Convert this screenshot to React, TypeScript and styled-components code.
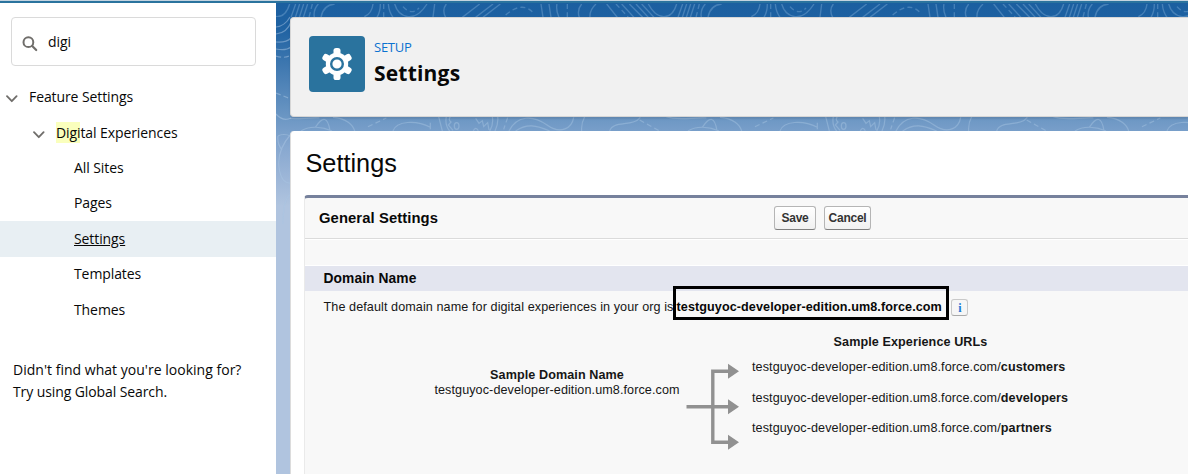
import React from "react";
import styled, { createGlobalStyle } from "styled-components";

const GlobalStyle = createGlobalStyle`
  *, *::after { box-sizing: border-box; }
  body { margin: 0; background: #fff; color: #080808; overflow: hidden; }
`;

const setupFont = `"Segoe UI", "Open Sans", sans-serif`;
const classicFont = `"Liberation Sans", Arial, sans-serif`;

const Page = styled.div`
  display: flex;
  flex-direction: column;
  width: 1188px;
  height: 474px;
  overflow: hidden;
`;
const TopBar = styled.div`
  flex: none;
  height: 3px;
  background: #2a739e;
  border-top: 1px solid #c3d3e0;
`;
const Columns = styled.div`
  flex: 1;
  display: flex;
  min-height: 0;
`;

/* ---------- sidebar ---------- */
const Sidebar = styled.aside`
  flex: none;
  width: 276px;
  background: #fff;
  font: 14px/22px ${setupFont};
  letter-spacing: -0.09px;
`;
const SearchBox = styled.div`
  display: flex;
  align-items: center;
  width: 245px;
  height: 49px;
  margin: 14px 0 13.6px 11px;
  padding: 0 0 0 10px;
  gap: 10px;
  border: 1px solid #dadada;
  border-radius: 4px;
  svg { margin-top: 5px; }
`;
const Tree = styled.nav`
  display: flex;
  flex-direction: column;
`;
const TreeRow = styled.div<{ $indent: number; $active?: boolean }>`
  display: flex;
  align-items: center;
  height: 35.4px;
  padding-left: ${(p) => p.$indent}px;
  background: ${(p) => (p.$active ? "#e8eff3" : "transparent")};
  text-decoration: ${(p) => (p.$active ? "underline" : "none")};
  svg { margin: 4px 11.5px 0 0; }
`;
const Mark = styled.mark`
  background: #faffbd;
  color: inherit;
  padding: 1px 0;
`;
const HintBlock = styled.div`
  padding-top: 31.5px;
`;
const Hint = styled.p<{ $tracking: number }>`
  margin: 0 0 0 13px;
  letter-spacing: ${(p) => p.$tracking}px;
`;

/* ---------- content area ---------- */
const Content = styled.main`
  flex: 1;
  display: grid;
  min-width: 0;
  background: linear-gradient(#1b5fa0 0, #1f62a2 25px, #6c97c4 115px, #88a8d0 145px, #b0c4df 203px);
  > * { grid-area: 1 / 1; }
`;
const Cards = styled.div`
  position: relative;
  display: flex;
  flex-direction: column;
  gap: 14px;
  padding: 14px 0 0 14px;
`;
const HeaderCard = styled.header`
  display: flex;
  flex: none;
  height: 100px;
  padding: 18px 0 0 18px;
  gap: 9px;
  background: #f1f1f1;
  border: 1px solid #d6d6d6;
  border-right: 0;
  border-radius: 4px 0 0 4px;
  box-shadow: 0 2px 2px rgba(0, 0, 0, 0.1);
`;
const IconTile = styled.div`
  display: flex;
  align-items: center;
  justify-content: center;
  width: 56px;
  height: 56px;
  border-radius: 4px;
  background: #2a739e;
`;
const Eyebrow = styled.div`
  font: 13px/18px ${setupFont};
  letter-spacing: -0.25px;
  color: #0b72d0;
  padding-top: 2px;
`;
const PageName = styled.div`
  font: 700 21px/26px ${setupFont};
  letter-spacing: 0.2px;
  padding-top: 4px;
`;
const MainCard = styled.section`
  flex: 1;
  background: #fff;
  border-left: 1px solid #dcdcdc;
  border-radius: 4px 0 0 0;
  padding: 16px 0 0 14px;
  display: flex;
  flex-direction: column;
  font-family: ${classicFont};
`;
const Title = styled.h1`
  margin: 0 0 16px 0.5px;
  font-size: 25.3px;
  line-height: 32px;
  font-weight: 400;
`;
const Panel = styled.div`
  flex: 1;
  margin-left: -1px;
  background: #f8f8f8;
  border-top: 3px solid #76819c;
  border-left: 1px solid #eaeaea;
  border-radius: 4px 0 0 0;
  color: #161616;
  font-size: 12.6px;
  line-height: 15px;
  letter-spacing: 0.09px;
`;
const PanelHead = styled.div`
  display: flex;
  align-items: center;
  height: 41px;
  padding: 0 0 1px 14px;
  border-bottom: 1px solid #dbdbdb;
  box-shadow: 0 1px #fff;
`;
const PanelTitle = styled.h2`
  margin: 0;
  width: 455px;
  padding-top: 2px;
  color: #080808;
  font-size: 14.8px;
`;
const Button = styled.button<{ $width: number }>`
  width: ${(p) => p.$width}px;
  height: 24px;
  margin-right: 8px;
  padding: 0;
  border: 1px solid #b5b5b5;
  border-bottom-color: #7f7f7f;
  border-radius: 3px;
  background: linear-gradient(#fff, #f1f1f1);
  color: #333;
  font: 700 12px/20px ${classicFont};
  letter-spacing: -0.25px;
`;
const SectionBand = styled.h3`
  margin: 26px 0 0;
  height: 26px;
  padding-left: 18.5px;
  border-top: 1px solid #fff;
  background: #e3e5ef;
  color: #080808;
  font-size: 13.8px;
  line-height: 25px;
`;
const DomainLine = styled.div`
  display: flex;
  align-items: center;
  height: 32px;
  padding-left: 18.5px;
`;
const Highlight = styled.strong`
  position: relative;
  margin-left: 3px;
  color: #080808;
  &::after {
    content: "";
    position: absolute;
    left: -3.5px;
    top: -14px;
    width: 276px;
    height: 34px;
    border: 3px solid #000;
  }
`;
const InfoBadge = styled.span`
  display: flex;
  align-items: center;
  justify-content: center;
  width: 17px;
  height: 17px;
  margin: 1px 0 0 9.5px;
  border: 1px solid #c9c9c9;
  border-bottom-color: #aaa;
  border-radius: 3px;
  background: #f6f6f6;
  color: #1f7ad6;
  font: 700 12px/14px "Liberation Serif", serif;
`;
const Diagram = styled.div`
  display: flex;
  padding-top: 11px;
`;
const Source = styled.div`
  width: 246px;
  margin: 34px 6px 0 129px;
  text-align: center;
  white-space: nowrap;
`;
const Arrows = styled.div`
  padding-top: 27px;
`;
const Targets = styled.div`
  margin-left: 11px;
  width: 317px;
`;
const TargetsTitle = styled.div`
  text-align: center;
  font-weight: 700;
  padding: 1px 0 10px;
`;
const TargetUrl = styled.div`
  height: 30.5px;
  white-space: nowrap;
`;

const Chevron = () => (
  <svg width="12" height="8" viewBox="0.5 0 12 8" fill="none" stroke="#706e6b" strokeWidth="1.8" strokeLinecap="round" strokeLinejoin="round">
    <path d="M1.5 1.2 6.3 6.2 11.1 1.2" />
  </svg>
);

const SearchIcon = () => (
  <svg width="16" height="16" viewBox="0 0 16 16" fill="none" stroke="#706e6b">
    <circle cx="6.4" cy="6.2" r="4.9" strokeWidth="2" />
    <path d="m10.2 10 4 4" strokeWidth="2.2" strokeLinecap="round" />
  </svg>
);

const GearIcon = () => (
  <svg width="30" height="32" viewBox="-15 -16 30 32" fill="#fff">
    <circle r="11.2" />
    {[0, 60, 120, 180, 240, 300].map((a) => (
      <rect key={a} x="-3.5" y="-16" width="7" height="10" rx="2.6" transform={`rotate(${a})`} />
    ))}
    <circle r="5.8" fill="none" stroke="#2a739e" strokeWidth="2.4" />
  </svg>
);

/* Topographic line art behind the cards; both strips repeat every 387px. */
const Topography = () => (
  <svg width="912" height="240" viewBox="276 3 912 240" fill="none">
    <defs>
      <pattern id="upper" x="173" y="0" width="387" height="17" patternUnits="userSpaceOnUse">
        <g transform="scale(.33333)" stroke="#6ea0cd" strokeOpacity=".5" strokeWidth="4" fill="none">
          <path d="M65 12Q50 30 58 52M108 12Q88 30 90 52M140 12 172 52M185 12 222 52M208 12 248 52M228 12 265 52M245 12 282 52M265 12Q285 50 312 50T350 12M368 12 354 52M380 12 367 52M392 12 379 52M404 12 391 52M436 12Q420 30 424 52M485 12Q450 16 444 52M600 12Q597 40 574 50M622 12Q622 36 612 52M646 12Q648 36 660 52M665 12Q675 46 705 50T762 12M785 12 780 52M820 12Q806 30 818 52M868 52 920 12M908 52 960 12M930 52 982 12M1104 12 1110 52M1128 12 1134 52M1152 12Q1148 30 1158 52" />
          <path d="M22 12V52M168 12 205 52M418 12 408 52M632 12V52M690 20Q715 48 738 24M998 45Q1050 0 1084 42" strokeDasharray="15 10" />
        </g>
      </pattern>
      <pattern id="lower" x="333" y="100" width="387" height="31" patternUnits="userSpaceOnUse">
        <g transform="scale(.33333)" stroke="#a4c1e0" strokeOpacity=".5" strokeWidth="3.5" fill="none">
          <path d="M0 52C40 55 60 75 65 93M180 93C190 62 250 60 292 82M292 68V88M317 50 328 93M340 50Q335 75 350 93M352 50Q345 60 354 66L346 75 360 91M478 50Q482 75 470 93M494 50Q497 70 486 93M428 55 438 70 448 62 452 80 464 68 468 90M421 92Q428 78 436 92M528 93C552 45 600 45 642 75S717 84 722 52M548 93C580 70 610 75 650 93M755 50Q744 70 746 93M830 93C840 60 900 82 922 52M1000 50C1030 62 1080 52 1120 54M1108 82Q1142 30 1152 92M1065 93C1090 76 1130 80 1158 93" />
          <ellipse cx="371" cy="78" rx="7" ry="10" />
          <path d="M105 80 160 54M524 53 512 88M920 60 980 93" strokeDasharray="15 10" />
        </g>
      </pattern>
    </defs>
    <rect x="276" y="4" width="912" height="13" fill="url(#upper)" />
    <rect x="290" y="117" width="898" height="14" fill="url(#lower)" />
    <g stroke="#a9c5e4" strokeOpacity=".5" strokeWidth="1.2">
      <path d="M276 27Q285 26 290 17M276 34Q287 33 291 22M276 42Q286 43 291 38M276 49Q286 51 291 47" />
      <path d="M276 56Q285 59 291 55M276 93 291 99" strokeDasharray="5 3" />
      <path d="M276 114Q283 122 291 118M278 136Q283 133 291 136M278 136Q277 144 282 150M291 134Q277 150 279 167T291 183M291 194Q283 198 283 224" />
    </g>
  </svg>
);

const BranchArrows = () => (
  <svg width="55" height="90" viewBox="0 0 55 90" fill="none" stroke="#919191" strokeWidth="3.4">
    <path d="M0.5 45.7H43M43 10.2H26.8V81.2H43" />
    <path d="M42 2.7 53 10.2 42 17.7ZM42 38.2 53 45.7 42 53.2ZM42 73.7 53 81.2 42 88.7Z" fill="#919191" stroke="none" />
  </svg>
);

const HOST = "testguyoc-developer-edition.um8.force.com";
const LEAVES = ["All Sites", "Pages", "Settings", "Templates", "Themes"];
const PATHS = ["customers", "developers", "partners"];

export default function App() {
  return (
    <Page>
      <GlobalStyle />
      <TopBar />
      <Columns>
        <Sidebar>
          <SearchBox>
            <SearchIcon />
            <span>digi</span>
          </SearchBox>
          <Tree>
            <TreeRow $indent={5.5}>
              <Chevron />
              Feature Settings
            </TreeRow>
            <TreeRow $indent={32.5}>
              <Chevron />
              <span><Mark>Digi</Mark>tal Experiences</span>
            </TreeRow>
            {LEAVES.map((name) => (
              <TreeRow key={name} $indent={74} $active={name === "Settings"}>{name}</TreeRow>
            ))}
          </Tree>
          <HintBlock>
            <Hint $tracking={0.02}>Didn't find what you're looking for?</Hint>
            <Hint $tracking={-0.1}>Try using Global Search.</Hint>
          </HintBlock>
        </Sidebar>
        <Content>
          <Topography />
          <Cards>
            <HeaderCard>
              <IconTile><GearIcon /></IconTile>
              <div>
                <Eyebrow>SETUP</Eyebrow>
                <PageName>Settings</PageName>
              </div>
            </HeaderCard>
            <MainCard>
              <Title>Settings</Title>
              <Panel>
                <PanelHead>
                  <PanelTitle>General Settings</PanelTitle>
                  <Button $width={42}>Save</Button>
                  <Button $width={47}>Cancel</Button>
                </PanelHead>
                <SectionBand>Domain Name</SectionBand>
                <DomainLine>
                  <span>The default domain name for digital experiences in your org is</span>
                  <Highlight>{HOST}</Highlight>
                  <InfoBadge>i</InfoBadge>
                </DomainLine>
                <Diagram>
                  <Source>
                    <strong>Sample Domain Name</strong>
                    <div>{HOST}</div>
                  </Source>
                  <Arrows><BranchArrows /></Arrows>
                  <Targets>
                    <TargetsTitle>Sample Experience URLs</TargetsTitle>
                    {PATHS.map((path) => (
                      <TargetUrl key={path}>{HOST}/<strong>{path}</strong></TargetUrl>
                    ))}
                  </Targets>
                </Diagram>
              </Panel>
            </MainCard>
          </Cards>
        </Content>
      </Columns>
    </Page>
  );
}
